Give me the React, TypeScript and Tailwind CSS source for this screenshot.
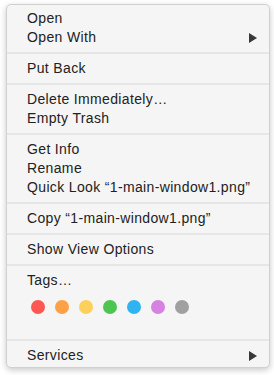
import React from "react";

const Row = ({ label, arrow }: { label: string; arrow?: boolean }) => (
  <div className="flex h-[19px] items-center justify-between pl-[20px] pr-[12px] text-[14px] leading-[19px] tracking-[0.35px] text-[#222222]">
    <span>{label}</span>
    {arrow && (
      <svg width="8" height="10" viewBox="0 0 8 10" className="block">
        <polygon points="0,0 8,5 0,10" fill="#383838" />
      </svg>
    )}
  </div>
);

const Sep = () => (
  <div className="py-[5px]">
    <div className="h-[2px] bg-[#e6e6e6]" />
  </div>
);

const dots = ["#fc5753", "#fda046", "#fcd05a", "#4ec553", "#2fb4f0", "#d582e0", "#a0a0a0"];

export default function App() {
  return (
    <div className="min-h-[375px] w-[274px] bg-white pl-[6px] pt-[4px]" style={{ fontFamily: '"Liberation Sans", Arial, sans-serif' }}>
      <div className="flex w-[264px] flex-col rounded-[5px] border border-[#d0d0d0] bg-[#f5f5f5] pb-[2px] pt-[4px] shadow-[0_2px_6px_rgba(0,0,0,0.22)]">
        <Row label="Open" />
        <Row label="Open With" arrow />
        <Sep />
        <Row label="Put Back" />
        <Sep />
        <Row label="Delete Immediately…" />
        <Row label="Empty Trash" />
        <Sep />
        <Row label="Get Info" />
        <Row label="Rename" />
        <Row label="Quick Look “1-main-window1.png”" />
        <Sep />
        <Row label="Copy “1-main-window1.png”" />
        <Sep />
        <Row label="Show View Options" />
        <Sep />
        <Row label="Tags…" />
        <div className="flex gap-[10px] pl-[24px] pt-[10px] pb-[20px]">
          {dots.map((c) => (
            <div key={c} className="h-[14px] w-[14px] rounded-full" style={{ backgroundColor: c }} />
          ))}
        </div>
        <Sep />
        <Row label="Services" arrow />
      </div>
    </div>
  );
}
